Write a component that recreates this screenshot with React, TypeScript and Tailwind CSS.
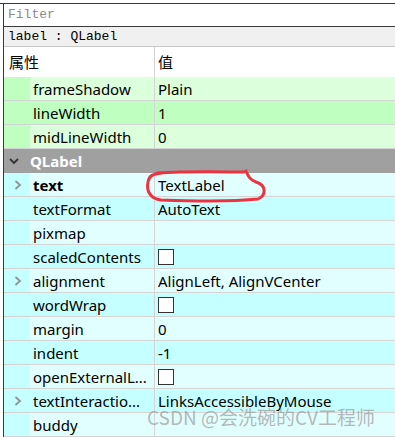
type Row = {
  name: string;
  value?: string;
  check?: boolean;
  dark: boolean;
  bold?: boolean;
  arrow?: boolean;
};

const green: Row[] = [
  { name: "frameShadow", value: "Plain", dark: false },
  { name: "lineWidth", value: "1", dark: true },
  { name: "midLineWidth", value: "0", dark: false },
];

const cyan: Row[] = [
  { name: "text", value: "TextLabel", dark: false, bold: true, arrow: true },
  { name: "textFormat", value: "AutoText", dark: true },
  { name: "pixmap", value: "", dark: false },
  { name: "scaledContents", check: true, dark: true },
  { name: "alignment", value: "AlignLeft, AlignVCenter", dark: false, arrow: true },
  { name: "wordWrap", check: true, dark: true },
  { name: "margin", value: "0", dark: false },
  { name: "indent", value: "-1", dark: true },
  { name: "openExternalL...", check: true, dark: false },
  { name: "textInteractio...", value: "LinksAccessibleByMouse", dark: true, arrow: true },
  { name: "buddy", value: "", dark: false },
];

function Arrow() {
  return (
    <svg width="8" height="10" viewBox="0 0 8 10" className="ml-[10px]">
      <polyline points="1.5,1 6,5 1.5,9" fill="none" stroke="#8c9496" strokeWidth="1.8" />
    </svg>
  );
}

function PropRow({ row, darkBg, lightBg }: { row: Row; darkBg: string; lightBg: string }) {
  const cellBg = row.dark ? darkBg : lightBg;
  return (
    <div className="flex h-[24px] border-b border-[#d4d4d4]">
      <div className={`w-[26px] flex items-center ${darkBg}`}>{row.arrow && <Arrow />}</div>
      <div className={`w-[125px] border-r border-[#d4d4d4] pl-[3px] pt-px flex items-center ${cellBg} ${row.bold ? "font-bold" : ""}`}>
        {row.name}
      </div>
      <div className={`flex-1 pl-[3px] pt-px flex items-center ${cellBg}`}>
        {row.check ? <div className="w-[16px] h-[16px] border border-[#333] bg-white" /> : row.value}
      </div>
    </div>
  );
}

export default function App() {
  return (
    <div className="relative w-[395px] h-[437px] overflow-hidden bg-white text-[15px] text-black font-['Noto_Sans','Noto_Sans_CJK_SC',sans-serif]">
      <div className="h-[3px]" />
      <div className="border-t border-[#3a3a3a]">
        <div className="ml-[3px] border-l border-[#3a3a3a]">
          {/* filter box */}
          <div className="h-[23px] border-b border-[#3a3a3a] pl-[4px] flex items-center font-['Liberation_Mono',monospace] text-[13px] text-[#8a8a8a]">
            Filter
          </div>
          <div className="h-[20px] bg-[#f0f0f0] border-b border-[#c8c8c8] pl-[4px] flex items-center font-['Liberation_Mono',monospace] text-[13px]">
            label : QLabel
          </div>
          {/* header */}
          <div className="flex h-[30px] bg-white">
            <div className="w-[151px] border-r border-[#d4d4d4] pl-[5px] flex items-center font-['Noto_Sans_CJK_SC',sans-serif] text-[15px]">
              属性
            </div>
            <div className="flex-1 pl-[3px] flex items-center font-['Noto_Sans_CJK_SC',sans-serif] text-[15px]">值</div>
          </div>
          {green.map((r) => (
            <PropRow key={r.name} row={r} darkBg="bg-[#bfffbf]" lightBg="bg-[#dcffdc]" />
          ))}
          {/* QLabel group */}
          <div className="flex h-[24px] bg-[#a0a0a0] items-center">
            <svg width="10" height="8" viewBox="0 0 10 8" className="ml-[5px]">
              <polyline points="1,2 5,6 9,2" fill="none" stroke="#333" strokeWidth="1.8" />
            </svg>
            <span className="ml-[11px] pt-px font-bold text-white">QLabel</span>
          </div>
          {cyan.map((r) => (
            <PropRow key={r.name} row={r} darkBg="bg-[#c6ffff]" lightBg="bg-[#e2ffff]" />
          ))}
        </div>
      </div>

      {/* red hand-drawn mark */}
      <svg className="absolute left-0 top-0 pointer-events-none" width="395" height="437">
        <path
          d="M157 173 C 190 171, 225 172, 244 172 L 246 171 C 248 176, 250 180, 256 182 C 266 185, 267 195, 258 199 C 230 202, 190 201, 161 200 C 150 199, 146 190, 148 182 C 149 176, 152 174, 162 173"
          fill="none"
          stroke="#ee3340"
          strokeWidth="3"
          strokeLinecap="round"
        />
      </svg>

      {/* watermark */}
      <div className="absolute left-[147px] top-[404px] text-[19px] leading-[26px] text-[#9a9a9a]/70 font-['Noto_Sans_CJK_SC',sans-serif] pointer-events-none">
        CSDN @会洗碗的CV工程师
      </div>
    </div>
  );
}
